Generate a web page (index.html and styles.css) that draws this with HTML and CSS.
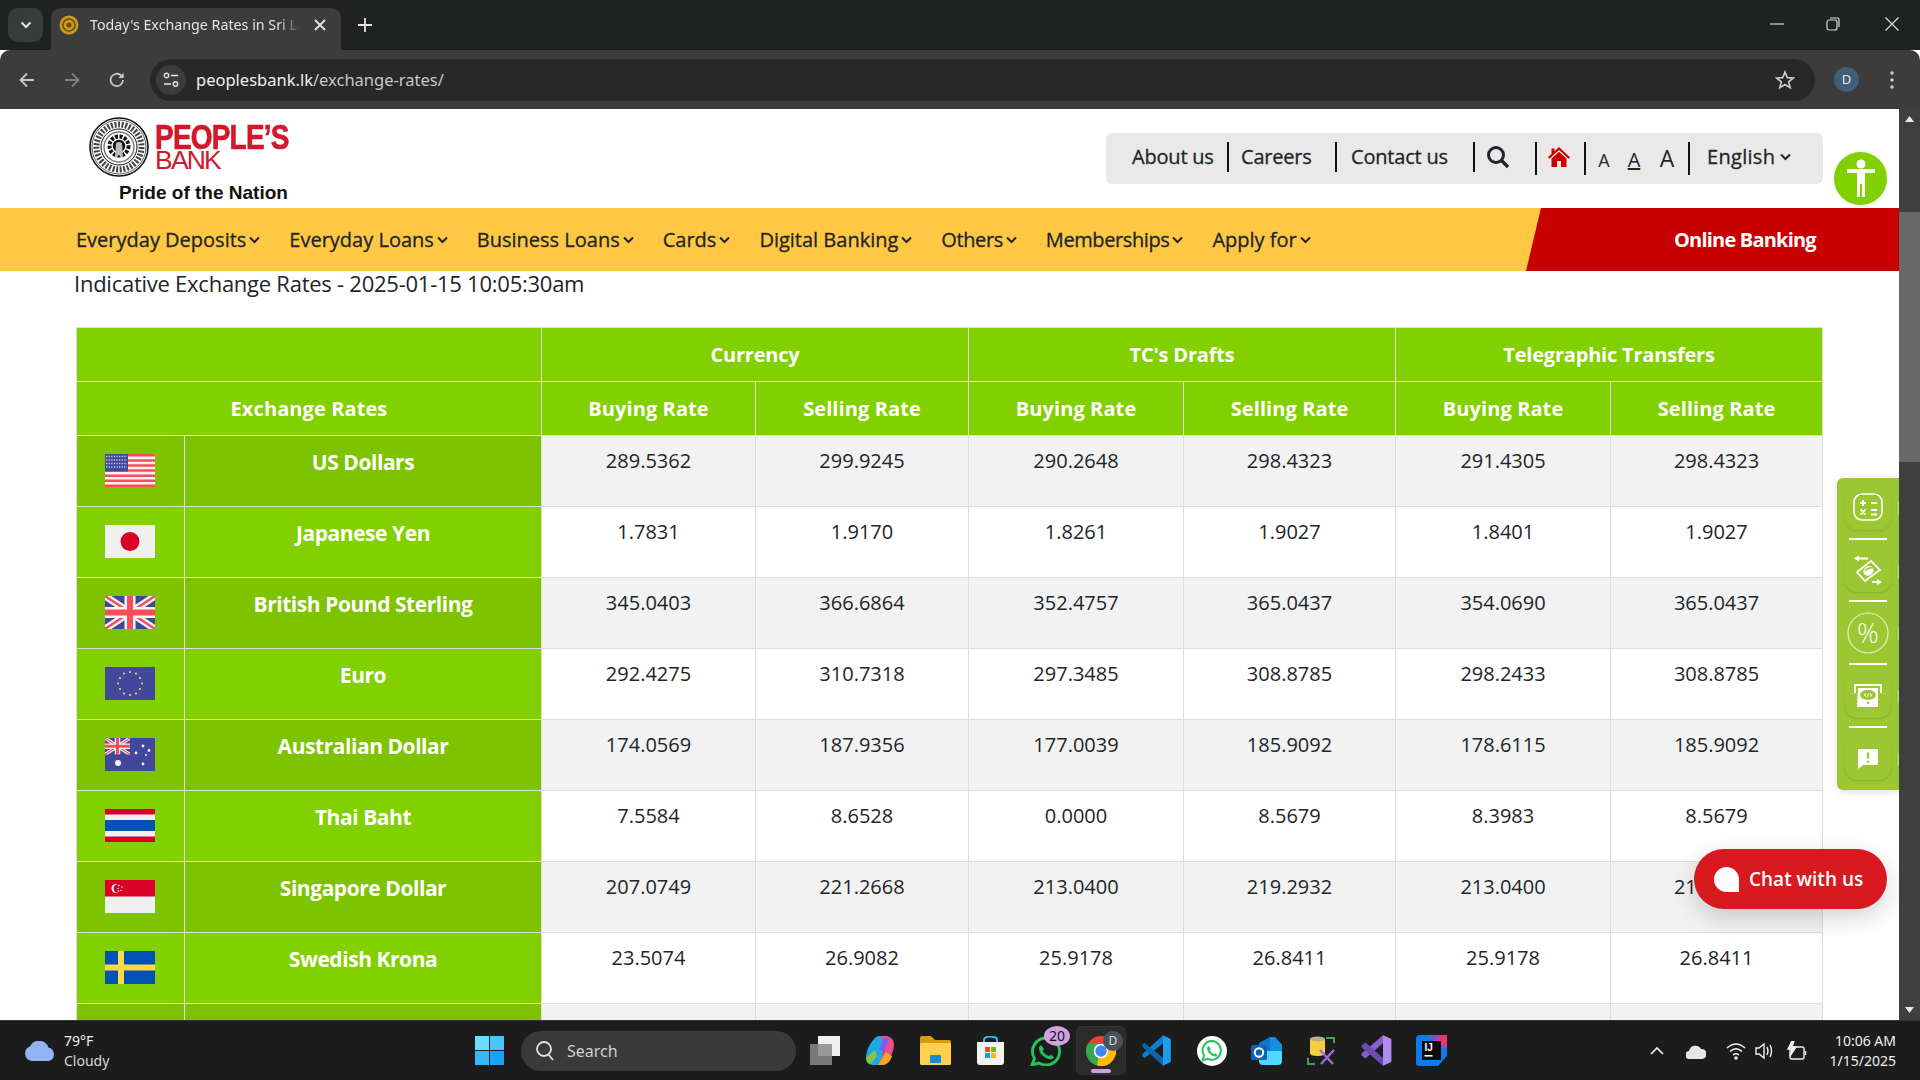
FILE: index.html
```html
<!DOCTYPE html>
<html lang="en">
<head>
<meta charset="utf-8">
<title>Today's Exchange Rates in Sri Lanka</title>
<link rel="stylesheet" href="styles.css">
</head>
<body>
<svg class="defs" width="0" height="0" aria-hidden="true">
  <defs>
    <g id="chev"><path d="M1 1.5 5.5 6 10 1.5" fill="none" stroke="currentColor" stroke-width="2"/></g>
    <g id="uj">
      <rect width="50" height="33" fill="#41479b"/>
      <path d="M0 0 50 33M50 0 0 33" stroke="#f5f5f5" stroke-width="7"/>
      <path d="M0 0 25 16.5M50 33 25 16.5M50 0 25 16.5M0 33 25 16.5" stroke="#ff4b55" stroke-width="2.4"/>
      <path d="M25 0V33M0 16.5H50" stroke="#f5f5f5" stroke-width="11"/>
      <path d="M25 0V33M0 16.5H50" stroke="#ff4b55" stroke-width="6"/>
    </g>
  </defs>
</svg>
<div class="screen">
  <header class="tabstrip">
    <div class="tabmenu"><svg width="12" height="8" viewBox="0 0 11 8"><use href="#chev"/></svg></div>
    <div class="tab">
      <svg class="favicon" width="20" height="20" viewBox="0 0 20 20"><circle cx="10" cy="10" r="9.5" fill="#c99a22"/><circle cx="10" cy="10" r="6" fill="none" stroke="#6b4a0a" stroke-width="1.6"/><circle cx="10" cy="10" r="2.5" fill="#6b4a0a"/></svg>
      <span class="tabtitle">Today's Exchange Rates in Sri Lanka</span>
      <svg class="tabclose" width="12" height="12" viewBox="0 0 12 12"><path d="M1 1 11 11M11 1 1 11" stroke="#e3e3e3" stroke-width="1.8"/></svg>
    </div>
    <svg class="newtab" width="14" height="14" viewBox="0 0 14 14"><path d="M7 0V14M0 7H14" stroke="#e3e3e3" stroke-width="1.8"/></svg>
    <div class="winctl">
      <svg class="wc-min" width="14" height="14" viewBox="0 0 14 14"><path d="M0 7H14" stroke="#d8d8d8" stroke-width="1.2"/></svg>
      <svg width="14" height="14" viewBox="0 0 14 14"><rect x="1" y="3" width="10" height="10" rx="2" fill="none" stroke="#d8d8d8" stroke-width="1.2"/><path d="M4 1H11.5Q13 1 13 2.5V10" fill="none" stroke="#d8d8d8" stroke-width="1.2"/></svg>
      <svg width="14" height="14" viewBox="0 0 14 14"><path d="M.5.5 13.5 13.5M13.5.5.5 13.5" stroke="#d8d8d8" stroke-width="1.2"/></svg>
    </div>
  </header>
  <nav class="toolbar">
    <svg class="tb-btn" width="18" height="18" viewBox="0 0 18 18"><path d="M16 9H2.5M9 2.5 2.5 9 9 15.5" fill="none" stroke="#c7c7c7" stroke-width="1.8"/></svg>
    <svg class="tb-btn" width="18" height="18" viewBox="0 0 18 18"><path d="M2 9H15.5M9 2.5 15.5 9 9 15.5" fill="none" stroke="#7d7d7d" stroke-width="1.8"/></svg>
    <svg class="tb-btn" width="18" height="18" viewBox="0 0 18 18"><path d="M15 9a6.2 6.2 0 1 1-1.9-4.5L15 6.4" fill="none" stroke="#c7c7c7" stroke-width="1.8"/><path d="M15.6 1.8V7H10.4" fill="#c7c7c7"/></svg>
    <div class="omnibox">
      <div class="tune"><svg width="16" height="16" viewBox="0 0 16 16"><circle cx="3.5" cy="3.5" r="2.2" fill="none" stroke="#e3e3e3" stroke-width="1.4"/><path d="M8 3.5H15M1 12H8" stroke="#e3e3e3" stroke-width="1.6"/><circle cx="12.5" cy="12" r="2.2" fill="none" stroke="#e3e3e3" stroke-width="1.4"/></svg></div>
      <div class="url"><span class="host">peoplesbank.lk</span>/exchange-rates/</div>
      <svg class="star" width="20" height="20" viewBox="0 0 20 20"><path d="M10 2 12.3 7.6 18.3 8 13.7 11.9 15.2 17.8 10 14.6 4.8 17.8 6.3 11.9 1.7 8 7.7 7.6Z" fill="none" stroke="#c7c7c7" stroke-width="1.7"/></svg>
    </div>
    <div class="avatar">D</div>
    <svg class="kebab" width="4" height="18" viewBox="0 0 4 18"><circle cx="2" cy="2" r="1.8" fill="#c7c7c7"/><circle cx="2" cy="9" r="1.8" fill="#c7c7c7"/><circle cx="2" cy="16" r="1.8" fill="#c7c7c7"/></svg>
  </nav>

  <div class="viewport">
    <main class="page">
      <div class="topbar">
        <a class="logo">
          <span class="logo-row">
            <svg class="seal" width="60" height="60" viewBox="0 0 60 60"><circle cx="30" cy="30" r="29" fill="#fff" stroke="#111" stroke-width="1.6"/><circle cx="30" cy="30" r="27" fill="none" stroke="#111" stroke-width=".7"/><circle cx="30" cy="30" r="22.5" fill="none" stroke="#444" stroke-width="6" stroke-dasharray="2 1.6"/><circle cx="30" cy="30" r="18" fill="#fff" stroke="#111" stroke-width="1"/><circle cx="30" cy="30" r="15" fill="none" stroke="#777" stroke-width="1.4"/><circle cx="30" cy="29" r="9.5" fill="none" stroke="#111" stroke-width="4" stroke-dasharray="3 1.5"/><circle cx="30" cy="29" r="6.2" fill="#111"/><path d="M27 26Q30 24 33 26L34 41 30 38 26 41Z" fill="#bbb"/></svg>
            <span class="wordmark"><span class="wm-top">PEOPLE’S</span><span class="wm-bot">BANK</span></span>
          </span>
          <span class="tagline">Pride of the Nation</span>
        </a>
        <div class="utility">
          <a class="u u-about">About us</a><i class="sep"></i>
          <a class="u u-careers">Careers</a><i class="sep"></i>
          <a class="u u-contact">Contact us</a><i class="sep"></i>
          <svg class="u-search" width="24" height="24" viewBox="0 0 24 24"><circle cx="10" cy="10" r="7.5" fill="none" stroke="#212529" stroke-width="3"/><path d="M15.5 15.5 22 22" stroke="#212529" stroke-width="3.4"/></svg><i class="sep sep-t"></i>
          <svg class="u-home" width="22" height="20" viewBox="0 0 22 20"><path d="M11 0 22 10.2 20.6 11.8 11 3 1.4 11.8 0 10.2 3.5 7V1.500H6.500V4.300Z" fill="#c80000"/><path d="M3.500 11.500 11 4.700 18.500 11.500V20H13V14H9V20H3.500Z" fill="#c80000"/></svg><i class="sep sep-t"></i>
          <span class="aa a1">A</span><span class="aa a2">A</span><span class="aa a3">A</span><i class="sep sep-t"></i>
          <a class="u u-lang">English<svg class="chev" width="11" height="8" viewBox="0 0 11 8"><use href="#chev"/></svg></a>
        </div>
        <div class="a11y"><svg width="32" height="42" viewBox="0 0 32 42"><circle cx="16" cy="6" r="4.500" fill="#fff"/><path d="M2 11H30V15H20V39H17V26H15V39H12V15H2Z" fill="#fff"/></svg></div>
      </div>

      <div class="mainnav">
        <ul class="navlist">
          <li>Everyday Deposits<svg class="chev" width="11" height="8" viewBox="0 0 11 8"><use href="#chev"/></svg></li>
          <li>Everyday Loans<svg class="chev" width="11" height="8" viewBox="0 0 11 8"><use href="#chev"/></svg></li>
          <li>Business Loans<svg class="chev" width="11" height="8" viewBox="0 0 11 8"><use href="#chev"/></svg></li>
          <li>Cards<svg class="chev" width="11" height="8" viewBox="0 0 11 8"><use href="#chev"/></svg></li>
          <li>Digital Banking<svg class="chev" width="11" height="8" viewBox="0 0 11 8"><use href="#chev"/></svg></li>
          <li class="tight">Others<svg class="chev" width="11" height="8" viewBox="0 0 11 8"><use href="#chev"/></svg></li>
          <li class="tight">Memberships<svg class="chev" width="11" height="8" viewBox="0 0 11 8"><use href="#chev"/></svg></li>
          <li>Apply for<svg class="chev" width="11" height="8" viewBox="0 0 11 8"><use href="#chev"/></svg></li>
        </ul>
        <a class="online">Online Banking</a>
      </div>

      <h1 class="rates-title">Indicative Exchange Rates - 2025-01-15 10:05:30am</h1>

      <table class="rates">
        <colgroup>
          <col class="c-flag"><col class="c-name"><col class="c-1"><col class="c-2"><col class="c-3"><col class="c-4"><col class="c-5"><col class="c-6">
        </colgroup>
        <thead>
          <tr><th colspan="2"></th><th colspan="2">Currency</th><th colspan="2">TC's Drafts</th><th colspan="2">Telegraphic Transfers</th></tr>
          <tr class="subhead"><th colspan="2">Exchange Rates</th><th>Buying Rate</th><th>Selling Rate</th><th>Buying Rate</th><th>Selling Rate</th><th>Buying Rate</th><th>Selling Rate</th></tr>
        </thead>
        <tbody>
          <tr>
            <td class="flag"><svg width="50" height="33" viewBox="0 0 50 33"><rect width="50" height="33" fill="#f5f5f5"/><path d="M0 1.300H50M0 6.400H50M0 11.500H50M0 16.600H50M0 21.700H50M0 26.800H50M0 31.800H50" stroke="#ff4b55" stroke-width="2.500"/><rect width="23" height="17.500" fill="#41479b"/><path d="M1 2.500H22M1 6H22M1 9.500H22M1 13H22" stroke="#c5c8e8" stroke-width="1.300" stroke-dasharray="1.300 1.300"/></svg></td>
            <th class="name">US Dollars</th><td>289.5362</td><td>299.9245</td><td>290.2648</td><td>298.4323</td><td>291.4305</td><td>298.4323</td>
          </tr>
          <tr>
            <td class="flag"><svg width="50" height="33" viewBox="0 0 50 33"><rect width="50" height="33" fill="#f0f0f0"/><circle cx="25" cy="16.500" r="9.500" fill="#d80027"/></svg></td>
            <th class="name">Japanese Yen</th><td>1.7831</td><td>1.9170</td><td>1.8261</td><td>1.9027</td><td>1.8401</td><td>1.9027</td>
          </tr>
          <tr>
            <td class="flag"><svg width="50" height="33" viewBox="0 0 50 33"><use href="#uj"/></svg></td>
            <th class="name">British Pound Sterling</th><td>345.0403</td><td>366.6864</td><td>352.4757</td><td>365.0437</td><td>354.0690</td><td>365.0437</td>
          </tr>
          <tr>
            <td class="flag"><svg width="50" height="33" viewBox="0 0 50 33"><rect width="50" height="33" fill="#41479b"/><g fill="#ffe15a"><circle cx="25" cy="5" r="1"/><circle cx="31" cy="6.500" r="1"/><circle cx="35" cy="11" r="1"/><circle cx="37" cy="16.500" r="1"/><circle cx="35" cy="22" r="1"/><circle cx="31" cy="26.500" r="1"/><circle cx="25" cy="28" r="1"/><circle cx="19" cy="26.500" r="1"/><circle cx="15" cy="22" r="1"/><circle cx="13" cy="16.500" r="1"/><circle cx="15" cy="11" r="1"/><circle cx="19" cy="6.500" r="1"/></g></svg></td>
            <th class="name">Euro</th><td>292.4275</td><td>310.7318</td><td>297.3485</td><td>308.8785</td><td>298.2433</td><td>308.8785</td>
          </tr>
          <tr>
            <td class="flag"><svg width="50" height="33" viewBox="0 0 50 33"><rect width="50" height="33" fill="#41479b"/><svg width="25" height="16.500" viewBox="0 0 50 33"><use href="#uj"/></svg><g fill="#f5f5f5"><circle cx="13" cy="25" r="3"/><circle cx="38" cy="8" r="1.400"/><circle cx="31" cy="15" r="1.400"/><circle cx="44" cy="12.500" r="1.400"/><circle cx="41" cy="17" r="1"/><circle cx="38" cy="26" r="1.400"/></g></svg></td>
            <th class="name">Australian Dollar</th><td>174.0569</td><td>187.9356</td><td>177.0039</td><td>185.9092</td><td>178.6115</td><td>185.9092</td>
          </tr>
          <tr>
            <td class="flag"><svg width="50" height="33" viewBox="0 0 50 33"><rect width="50" height="33" fill="#d80027"/><rect y="5.500" width="50" height="22" fill="#f0f0f0"/><rect y="11" width="50" height="11" fill="#0052b4"/></svg></td>
            <th class="name">Thai Baht</th><td>7.5584</td><td>8.6528</td><td>0.0000</td><td>8.5679</td><td>8.3983</td><td>8.5679</td>
          </tr>
          <tr>
            <td class="flag"><svg width="50" height="33" viewBox="0 0 50 33"><rect width="50" height="33" fill="#f0f0f0"/><rect width="50" height="16.500" fill="#d80027"/><circle cx="11" cy="8.500" r="4.500" fill="#f0f0f0"/><circle cx="12.800" cy="8.500" r="4.200" fill="#d80027"/><g fill="#f0f0f0"><circle cx="14" cy="5.500" r=".8"/><circle cx="17" cy="7" r=".8"/><circle cx="13" cy="8.500" r=".8"/><circle cx="16" cy="10.500" r=".8"/><circle cx="13.500" cy="11" r=".8"/></g></svg></td>
            <th class="name">Singapore Dollar</th><td>207.0749</td><td>221.2668</td><td>213.0400</td><td>219.2932</td><td>213.0400</td><td>219.2932</td>
          </tr>
          <tr>
            <td class="flag"><svg width="50" height="33" viewBox="0 0 50 33"><rect width="50" height="33" fill="#0052b4"/><path d="M16 0V33M0 16.500H50" stroke="#ffda44" stroke-width="6"/></svg></td>
            <th class="name">Swedish Krona</th><td>23.5074</td><td>26.9082</td><td>25.9178</td><td>26.8411</td><td>25.9178</td><td>26.8411</td>
          </tr>
          <tr>
            <td class="flag"><svg width="50" height="33" viewBox="0 0 50 33"><rect width="50" height="33" fill="#005430"/></svg></td>
            <th class="name"></th><td></td><td></td><td></td><td></td><td></td><td></td>
          </tr>
        </tbody>
      </table>

      <aside class="sidetools">
        <div class="tool"><svg width="30" height="28" viewBox="0 0 30 28" fill="none" stroke="#fff" stroke-width="1.600"><rect x="1" y="1" width="28" height="26" rx="8"/><path d="M7 10H13M10 7V13M18 10H24M7.500 16.500 12.500 21.500M12.500 16.500 7.500 21.500M18 17H24M18 21.500H24" stroke-width="1.900"/></svg></div>
        <i class="rule"></i>
        <div class="tool"><svg width="28" height="30" viewBox="0 0 28 30" fill="none" stroke="#fff" stroke-width="1.800"><path d="M17 6 26 15 11 26 3 17Z" fill="none"/><ellipse cx="14.500" cy="15.800" rx="5.500" ry="4.500" fill="#fff" stroke="none" transform="rotate(-37 14.500 15.800)"/><path d="M11 16Q14 12 19 13" stroke="#9bc733" stroke-width="1.600"/><path d="M4 3.500H14M18 27H25" stroke-width="2"/><path d="M0 3.500 5 .5V6.500ZM28 27 23 24V30Z" fill="#fff" stroke="none"/></svg></div>
        <i class="rule"></i>
        <div class="tool tool-pct"><svg width="42" height="42" viewBox="0 0 42 42"><circle cx="21" cy="21" r="20" fill="none" stroke="#e6efc8" stroke-width="1.200"/><text class="pct" x="21" y="31" text-anchor="middle">%</text></svg></div>
        <i class="rule"></i>
        <div class="tool"><svg width="32" height="24" viewBox="0 0 32 24"><path d="M3 10V2H29V10" fill="none" stroke="#fff" stroke-width="2"/><path d="M6 5H26V24H5Z" fill="#fff"/><ellipse cx="16" cy="12" rx="8" ry="5" fill="#9bc733"/><path d="M14 10.500 12 12 14 13.500M18 10.500 20 12 18 13.500M16.800 10 15.200 14" fill="none" stroke="#fff" stroke-width="1"/><circle cx="16" cy="20" r="1.300" fill="#9bc733"/></svg></div>
        <i class="rule"></i>
        <div class="tool"><svg width="24" height="24" viewBox="0 0 24 24"><path d="M3 3H21Q22 3 22 4V18Q22 19 21 19H7L2 23V4Q2 3 3 3Z" fill="#fff"/><path d="M12 6.500V12.500M12 14.500V16.500" stroke="#9bc733" stroke-width="2.400"/></svg></div>
      </aside>

      <a class="chat"><i class="bubble"></i><span>Chat with us</span></a>
    </main>
    <div class="scrollbar">
      <svg class="sb-arrow" width="9" height="6" viewBox="0 0 9 6"><path d="M4.500 0 9 6H0Z" fill="#e8e8e8"/></svg>
      <div class="sb-track"><div class="sb-thumb"></div></div>
      <svg class="sb-arrow" width="9" height="6" viewBox="0 0 9 6"><path d="M0 0H9L4.500 6Z" fill="#e8e8e8"/></svg>
    </div>
  </div>

  <footer class="taskbar">
    <div class="weather">
      <svg width="32" height="20" viewBox="0 0 32 20"><path d="M8 20A7.500 7.500 0 0 1 6 5.500 10 10 0 0 1 24.500 6.500 7 7 0 0 1 25 20Z" fill="#8fb4f0"/></svg>
      <div class="w-text"><span>79°F</span><span>Cloudy</span></div>
    </div>
    <div class="winlogo"><i></i><i></i><i></i><i></i></div>
    <div class="searchbox">
      <svg width="20" height="22" viewBox="0 0 20 22"><circle cx="9" cy="9" r="7" fill="none" stroke="#e0e0e0" stroke-width="1.800"/><path d="M13.500 14.500 18 20" stroke="#e0e0e0" stroke-width="1.800"/></svg>
      <span>Search</span>
    </div>
    <svg class="ti i-task" width="30" height="29" viewBox="0 0 30 29"><rect x="8" y="0" width="22" height="20" fill="#f0f0f0"/><rect x="0" y="8" width="22" height="21" fill="#8a8a8a" fill-opacity=".85"/></svg>
    <svg class="ti i-copilot" width="30" height="29" viewBox="0 0 30 29"><path d="M9 3Q11 0 15 0H22L15 29H8Q1 29 1 22Q1 12 9 3Z" fill="#1ea8e8"/><path d="M10 14 1 22Q1 27 6 28L12 20Z" fill="#8bc34a"/><path d="M16 0H22Q29 2 29 8Q29 18 21 26Q19 29 14 29L19 14Z" fill="#e94f8a"/><path d="M19 2H24L20 14 14 14Z" fill="#7a5cf0"/><path d="M21 16 27 20Q25 27 19 29H13Z" fill="#f5a623"/></svg>
    <svg class="ti i-folder" width="31" height="29" viewBox="0 0 31 29"><path d="M0 2Q0 0 2 0H11L15 4H29Q31 4 31 6V10H0Z" fill="#d99a0c"/><rect y="7" width="31" height="22" rx="1.500" fill="#ffd14f"/><rect x="10" y="19" width="11" height="8" rx="1" fill="#1e88d8"/></svg>
    <svg class="ti i-store" width="29" height="29" viewBox="0 0 29 29"><path d="M8 7V4Q8 .5 14.500 .5T21 4V7" fill="none" stroke="#2cc0e8" stroke-width="2"/><path d="M1 6H28V26Q28 29 25 29H4Q1 29 1 26Z" fill="#f2f2f2"/><rect x="9" y="11" width="5" height="5" fill="#f25022"/><rect x="15" y="11" width="5" height="5" fill="#7fba00"/><rect x="9" y="17" width="5" height="5" fill="#00a4ef"/><rect x="15" y="17" width="5" height="5" fill="#ffb900"/></svg>
    <div class="ti i-wa">
      <svg width="32" height="30" viewBox="0 0 32 30"><path d="M16 2A13.500 13.500 0 0 0 4.500 22.500L2 29 9 27A13.500 13.500 0 1 0 16 2Z" fill="none" stroke="#25c15a" stroke-width="3"/><path d="M11 9 14 13 12.500 15Q15 19 19 20L21 18.500 24 21.500Q21 25 16 22Q9 18 9 12Q9 10 11 9Z" fill="#25c15a"/></svg>
      <span class="wa-badge">20</span>
    </div>
    <div class="chromebtn">
      <svg width="30" height="30" viewBox="0 0 30 30"><circle cx="15" cy="15" r="15" fill="#ea4335"/><path d="M1.950 7.600A15 15 0 0 0 11 29.450L17 18.500 15 8Z" fill="#34a853"/><path d="M28.600 8.500H15L11 29.450A15 15 0 0 0 28.600 8.500Z" fill="#fbbc05"/><circle cx="15" cy="15" r="7.300" fill="#fff"/><circle cx="15" cy="15" r="5.700" fill="#4285f4"/></svg>
      <span class="cb-badge">D</span>
      <i class="cb-line"></i>
    </div>
    <svg class="ti i-vsc" width="31" height="31" viewBox="0 0 100 100"><path d="M71 1V27L12 74 4 69V62Z" fill="#0a7fd0"/><path d="M71 99V73L12 26 4 31V38Z" fill="#0667ad"/><path d="M71 1 96 13V87L71 99Z" fill="#1f9cf0"/></svg>
    <div class="ti i-wa2"><svg width="22" height="22" viewBox="0 0 20 20"><path d="M10 1A8.500 8.500 0 0 0 2.800 14L1.500 18.500 6 17.200A8.500 8.500 0 1 0 10 1Z" fill="none" stroke="#25c15a" stroke-width="1.800"/><path d="M7 5.500 9 8 8 9.500Q9.500 12 12 13L13.500 12 15 14Q13 16 10 14 5.500 11.500 5.500 7.500Q5.500 6 7 5.500Z" fill="#25c15a"/></svg></div>
    <svg class="ti i-outlook" width="31" height="28" viewBox="0 0 31 28"><path d="M8 6 19 0H24L31 8V14H8Z" fill="#0f78d4"/><path d="M19 0H24L31 8V14H19Z" fill="#1490df"/><path d="M8 14H31V24Q31 28 27 28H12Q8 28 8 24Z" fill="#50d9ff"/><rect x="0" y="8" width="16" height="15" rx="1.500" fill="#0a64b4"/><circle cx="8" cy="15.500" r="4.200" fill="none" stroke="#fff" stroke-width="2"/></svg>
    <svg class="ti i-tool" width="28" height="29" viewBox="0 0 28 29"><path d="M3 3H18V17Q18 20 10.500 20T3 17Z" fill="#f4d03f"/><ellipse cx="10.500" cy="3" rx="7.500" ry="2.500" fill="#b9b08a"/><path d="M19 2H27V7M1 22V28H8" fill="none" stroke="#3aa655" stroke-width="2"/><path d="M13 14 26 28M27 14 14 28" stroke="#a56de2" stroke-width="2.200"/></svg>
    <svg class="ti i-vs" width="31" height="31" viewBox="0 0 100 100"><path d="M71 1V27L14 76 2 66V60Z" fill="#8661c5"/><path d="M71 99V73L14 24 2 34V40Z" fill="#6a4cb0"/><path d="M71 1 98 13V87L71 99Z" fill="#b18cf0"/></svg>
    <svg class="ti i-ij" width="31" height="31" viewBox="0 0 31 31"><path d="M4 0H31V21L22 31H3Q0 31 0 28V4Q0 0 4 0Z" fill="#0c7bf0"/><path d="M12 0H31V14L20 6Z" fill="#e6357c"/><path d="M14 0H25L18 8Z" fill="#7a4de0"/><rect x="6" y="6" width="19" height="19" fill="#0b0b0b"/><text class="ij" x="8.500" y="16">IJ</text><rect x="8.500" y="20" width="8" height="1.600" fill="#fff"/></svg>
    <svg class="tray t-up" width="14" height="8" viewBox="0 0 14 8"><path d="M1 7 7 1 13 7" fill="none" stroke="#f0f0f0" stroke-width="1.700"/></svg>
    <svg class="tray t-cloud" width="20" height="16" viewBox="0 0 20 16"><path d="M4 16A4 4 0 0 1 3 8 6.500 6.500 0 0 1 15 6 5 5 0 0 1 16 16Z" fill="#e6e6e6"/></svg>
    <svg class="tray t-wifi" width="20" height="18" viewBox="0 0 20 18" fill="none" stroke="#f0f0f0" stroke-width="1.600"><path d="M1 6Q10-2 19 6M4 9.500Q10 4 16 9.500M7 13Q10 10.500 13 13"/><circle cx="10" cy="16" r="1" fill="#f0f0f0"/></svg>
    <svg class="tray t-vol" width="20" height="18" viewBox="0 0 20 18" fill="none" stroke="#f0f0f0" stroke-width="1.400"><path d="M1 6H4L9 2V16L4 12H1Z"/><path d="M12 5Q14 9 12 13M15 3Q18 9 15 15"/></svg>
    <svg class="tray t-bat" width="22" height="20" viewBox="0 0 22 20" fill="none" stroke="#f0f0f0" stroke-width="1.400"><rect x="5" y="6" width="14" height="12" rx="2"/><path d="M20.500 10V14"/><path d="M7 0 3 8H7L5 15 11 6H7L9 0Z" fill="#f0f0f0"/></svg>
    <div class="clock"><span>10:06 AM</span><span>1/15/2025</span></div>
  </footer>
</div>
</body>
</html>
```
FILE: styles.css
```css
* { box-sizing: border-box; }
html, body { margin: 0; padding: 0; height: 100%; overflow: hidden; }
body { font-family: "Open Sans", "Liberation Sans", sans-serif; background: #fff; color: #212529; }
a { color: inherit; text-decoration: none; }
.defs { display: block; height: 0; }
.screen { width: 1920px; height: 1080px; display: flex; flex-direction: column; overflow: hidden; }

/* browser chrome */
.tabstrip { height: 50px; flex: none; background: #202222; display: flex; align-items: flex-end; position: relative; }
.tabmenu { width: 35px; height: 34px; margin: 0 8px 8px 8px; background: #3a3b3b; border-radius: 10px; display: flex; align-items: center; justify-content: center; color: #e3e3e3; }
.tab { width: 290px; height: 42px; background: #3c3c3c; border-radius: 10px 10px 0 0; display: flex; align-items: center; padding: 0 15px 8px 8px; }
.favicon { flex: none; }
.tabtitle { width: 210px; margin-left: 11px; font: 14.250px/20px "Noto Sans", sans-serif; color: #e3e3e3; white-space: nowrap; overflow: hidden; -webkit-mask-image: linear-gradient(90deg,#000 90%,transparent); mask-image: linear-gradient(90deg,#000 90%,transparent); }
.tabclose { margin-left: auto; }
.newtab { margin: 0 0 18px 17px; }
.winctl { margin: 0 21px 19px auto; display: flex; gap: 45px; }
.wc-min { margin-right: -3px; }
.toolbar { height: 59px; flex: none; background: #3c3c3c; border-radius: 10px 10px 0 0; display: flex; align-items: center; padding-left: 18px; margin-bottom: 0; }
.tb-btn { margin-right: 27px; flex: none; }
.tb-btn:nth-child(3) { margin-right: 24px; }
.omnibox { width: 1665px; height: 42px; background: #282828; border-radius: 21px; display: flex; align-items: center; padding-left: 6px; }
.tune { width: 30px; height: 30px; border-radius: 50%; background: #3c3c3c; display: flex; align-items: center; justify-content: center; }
.url { margin-left: 10px; font: 16.500px/24px "Noto Sans", sans-serif; color: #c7c7c7; }
.host { color: #f0f0f0; }
.star { margin-left: auto; margin-right: 20px; }
.avatar { width: 25px; height: 25px; margin-left: 19px; border-radius: 50%; background: #3e5f75; color: #e8e8e8; font: 13px/25px "Noto Sans", sans-serif; text-align: center; flex: none; }
.kebab { margin-left: 31px; flex: none; }

/* viewport */
.viewport { height: 911px; flex: none; display: flex; overflow: hidden; }
.page { width: 1899px; flex: none; background: #fff; position: relative; overflow: hidden; }
.scrollbar { width: 21px; flex: none; background: #3f3f3f; display: flex; flex-direction: column; align-items: center; }
.sb-arrow { flex: none; margin: 7px 0; }
.sb-track { flex: 1; width: 100%; padding-top: 83px; }
.sb-thumb { height: 250px; background: #686868; }

/* site header */
.topbar { height: 99px; position: relative; display: flex; align-items: flex-start; }
.logo { margin: 8px 0 0 89px; display: flex; flex-direction: column; width: 270px; }
.logo-row { display: flex; align-items: flex-start; }
.seal { flex: none; }
.wordmark { display: flex; flex-direction: column; margin: 0 0 0 6px; }
.wm-top { font: 700 35px/27px "Liberation Sans", sans-serif; color: #d2182b; letter-spacing: -1px; -webkit-text-stroke: .7px #d2182b; white-space: nowrap; margin-top: 6px; transform: scaleX(.8); transform-origin: left center; }
.wm-bot { font: 400 26.500px/21px "Liberation Sans", sans-serif; color: #d2182b; letter-spacing: -1.800px; }
.tagline { font: 700 19px/22px "Liberation Sans", sans-serif; color: #111; margin: 5px 0 0 30px; white-space: nowrap; }
.utility { position: absolute; left: 1106px; top: 24px; width: 717px; height: 51px; background: #e9e9e9; border-radius: 6px; display: flex; align-items: flex-start; padding: 9px 0 0 26px; }
.u { font-size: 20px; font-weight: 500; line-height: 30px; letter-spacing: -.2px; color: #212529; white-space: nowrap; -webkit-text-stroke: .3px #212529; }
.sep { display: block; width: 2px; height: 30px; background: #111; flex: none; }
.sep-t { height: 33px; }
.u-about { width: 95px; }
.u-careers { width: 94px; margin-left: 12px; }
.u-contact { width: 122px; margin-left: 14px; }
.u-search { margin: 3px 0 0 11px; width: 24px; flex: none; }
.u-home { margin: 5px 0 0 11px; flex: none; }
.u-search + .sep { margin-left: 25px; }
.u-home + .sep { margin-left: 14px; }
.aa { font-size: 20px; line-height: 30px; color: #212529; width: 30px; text-align: center; margin-top: 3px; }
.a1 { font-size: 18px; margin-left: 3px; }
.a2 { font-size: 20px; text-decoration: underline; margin-right: 3px; }
.a3 { font-size: 23px; font-weight: 500; margin-top: 1px; }
.a3 + .sep { margin-left: 6px; }
.u-lang { margin-left: 17px; display: flex; align-items: center; letter-spacing: .3px; }
.chev { margin-left: 3px; flex: none; }
.u-lang .chev { margin-left: 5px; }
.a11y { position: absolute; left: 1834px; top: 43px; width: 53px; height: 53px; border-radius: 50%; background: #82d000; display: flex; align-items: center; justify-content: center; box-shadow: 0 0 4px rgba(0,0,0,.1); }

/* main nav */
.mainnav { height: 63px; background: #ffc844; display: flex; align-items: center; position: relative; overflow: hidden; }
.navlist { list-style: none; margin: 0; padding: 0 0 0 76px; display: flex; gap: 29px; }
.navlist li { font-size: 20px; font-weight: 500; line-height: 30px; color: #212529; display: flex; align-items: center; white-space: nowrap; -webkit-text-stroke: .3px #212529; }
.navlist .tight { letter-spacing: -.4px; }
.online { position: absolute; left: 1526px; top: 0; bottom: 0; right: 0; background: #c80000; clip-path: polygon(15px 0, 100% 0, 100% 100%, 0 100%); color: #fff; font-size: 20px; font-weight: 700; line-height: 63px; padding-left: 148px; letter-spacing: -.8px; }

/* rates */
.rates-title { margin: 0 0 0 74px; height: 56px; font-size: 22px; font-weight: 400; line-height: 24px; color: #212529; letter-spacing: -.25px; white-space: nowrap; }
.rates { margin-left: 76px; width: 1746px; table-layout: fixed; border-collapse: collapse; font-size: 20px; }
.c-flag { width: 108px; } .c-name { width: 357px; } .c-1 { width: 214px; } .c-2 { width: 213px; }
.c-3 { width: 215px; } .c-4 { width: 212px; } .c-5 { width: 215px; } .c-6 { width: 212px; }
.rates thead th { height: 54px; background: #82d000; color: #fff; font-size: 20px; font-weight: 700; letter-spacing: -.2px; padding: 0; border: 1px solid #ddd; text-align: center; }
.rates .subhead th { letter-spacing: .1px; }
.rates tbody tr { height: 71px; }
.rates tbody td, .rates tbody th { padding: 7px 4px 0; vertical-align: top; text-align: center; border: 1px solid #ddd; height: 71px; overflow: hidden; }
.rates tbody td { color: #212529; font-size: 20px; line-height: 36px; white-space: nowrap; }
.rates tbody tr:nth-child(odd) td { background: #f2f2f2; }
.rates tbody tr:nth-child(even) td { background: #fff; }
.rates tbody .name { color: #fff; font-size: 21px; font-weight: 700; letter-spacing: -.45px; line-height: 36px; padding-top: 8px; }
.rates tbody tr:nth-child(odd) .name, .rates tbody tr:nth-child(odd) .flag { background: #7dc300; }
.rates tbody tr:nth-child(even) .name, .rates tbody tr:nth-child(even) .flag { background: #82d000; }
.rates tbody .flag { padding: 18px 2px 0 0; line-height: 0; }

/* floating tools */
.sidetools { position: absolute; left: 1837px; top: 369px; width: 62px; height: 312px; background: #9bc733; border-radius: 6px 0 0 6px; box-shadow: 0 2px 6px rgba(0,0,0,.12); display: flex; flex-direction: column; align-items: center; padding: 7px 8px 0; }
.tool { width: 46px; height: 44.670px; flex: none; border-radius: 12px; background: #9bc733; box-shadow: 0 1px 2px rgba(0,0,0,.12); display: flex; align-items: center; justify-content: center; position: relative; }
.tool::after { content: ""; position: absolute; right: -8px; top: 17px; width: 1px; height: 13px; background: rgba(255,255,255,.4); }
.tool-pct { box-shadow: none; background: none; }
.rule { display: block; width: 38px; height: 2px; background: #fff; flex: none; margin: 8px 0; }
.pct { font: 300 27px "Open Sans", sans-serif; fill: #fff; }
.chat { position: absolute; left: 1694px; top: 740px; width: 193px; height: 60px; border-radius: 30px; background: #d91920; color: #fff; display: flex; align-items: center; padding-left: 20px; gap: 10px; font-size: 19px; font-weight: 600; box-shadow: 0 8px 24px rgba(0,0,0,.18); }
.bubble { display: block; width: 25px; height: 25px; background: #fff; border-radius: 50% 50% 0 50%; flex: none; }

/* taskbar */
.taskbar { height: 60px; flex: none; background: #1c1c1c; border-top: 1px solid #333; display: flex; align-items: center; position: relative; color: #f0f0f0; }
.weather { display: flex; align-items: center; width: 475px; padding-left: 24px; flex: none; }
.w-text { margin-left: 8px; display: flex; flex-direction: column; font: 14px/20px "Noto Sans", sans-serif; }
.w-text span + span { color: #d8d8d8; }
.winlogo { width: 29px; height: 29px; flex: none; display: grid; grid-template-columns: 1fr 1fr; gap: 1px; }
.winlogo i:nth-child(1) { background: #6cdcff; } .winlogo i:nth-child(2) { background: #4ac5fb; }
.winlogo i:nth-child(3) { background: #35b8f8; } .winlogo i:nth-child(4) { background: #1ba3f3; }
.searchbox { width: 275px; height: 40px; margin-left: 17px; flex: none; border-radius: 20px; background: #3a3a3a; display: flex; align-items: center; padding-left: 14px; gap: 12px; font: 16px "Noto Sans", sans-serif; color: #d0d0d0; }
.ti { flex: none; }
.i-task { margin-left: 14px; }
.i-copilot { margin-left: 25px; }
.i-folder { margin-left: 25px; }
.i-store { margin-left: 25px; }
.i-wa { margin-left: 25px; position: relative; display: flex; }
.wa-badge { position: absolute; left: 14px; top: -10px; width: 26px; height: 20px; border-radius: 50%; background: #d3a0e6; color: #111; font: 14px/20px "Noto Sans", sans-serif; text-align: center; }
.chromebtn { width: 50px; height: 49px; margin-left: 14px; flex: none; background: #2b2b2b; border-radius: 6px; position: relative; display: flex; align-items: center; justify-content: center; border: 1px solid #333; }
.cb-badge { position: absolute; left: 26px; top: 4px; width: 20px; height: 20px; border-radius: 50%; background: #47525b; color: #ddd; font: 12px/20px "Noto Sans", sans-serif; text-align: center; }
.cb-line { position: absolute; left: 14px; bottom: 1px; width: 20px; height: 4px; border-radius: 2px; background: #d3a0e6; }
.i-vsc { margin-left: 15px; }
.i-wa2 { margin-left: 25px; width: 30px; height: 30px; background: #fff; border-radius: 50%; display: flex; align-items: center; justify-content: center; }
.i-outlook { margin-left: 24px; }
.i-tool { margin-left: 25px; }
.i-vs { margin-left: 26px; }
.i-ij { margin-left: 24px; }
.ij { font: 700 10px "Liberation Sans", sans-serif; fill: #fff; }
.tray { flex: none; }
.t-up { margin-left: 203px; }
.t-cloud { margin-left: 22px; }
.t-wifi { margin-left: 20px; }
.t-vol { margin-left: 9px; }
.t-bat { margin-left: 10px; }
.clock { margin-left: auto; padding-right: 24px; display: flex; flex-direction: column; align-items: flex-end; font: 14px/20px "Noto Sans", sans-serif; }
```
